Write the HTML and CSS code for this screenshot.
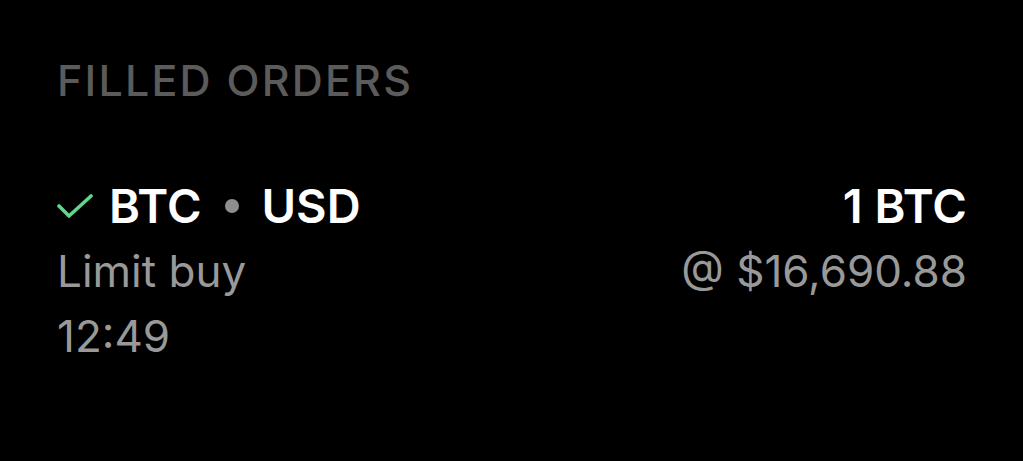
FILE: index.html
```html
<!DOCTYPE html>
<html lang="en">
<head>
    <meta charset="UTF-8">
    <title>Filled Orders</title>
    <link rel="stylesheet" href="styles.css">
</head>
<body>
    <section class="orders">
        <h2 class="orders-title">FILLED ORDERS</h2>
        <div class="order">
            <div class="order-left">
                <div class="pair">
                    <svg class="check" width="36" height="26" viewBox="0 0 36 26">
                        <path d="M2 13 L12 23 L34 3" fill="none" stroke="#5fd68c" stroke-width="3.6" stroke-linecap="round" stroke-linejoin="round"/>
                    </svg>
                    <span>BTC</span><span class="dot"></span><span>USD</span>
                </div>
                <div class="sub">Limit buy</div>
                <div class="sub">12:49</div>
            </div>
            <div class="order-right">
                <div class="amount">1 BTC</div>
                <div class="sub">@ $16,690.88</div>
            </div>
        </div>
    </section>
</body>
</html>
```

FILE: styles.css
```css
body {
    margin: 0;
    background: #000;
    color: #fff;
    font-family: Inter, 'Noto Sans', sans-serif;
}
.orders {
    padding: 54px 56px 0 57px;
}
.orders-title {
    margin: 0;
    font-size: 43px;
    font-weight: 500;
    letter-spacing: 2.2px;
    color: #5b5b5b;
    line-height: 52px;
}
.order {
    display: flex;
    justify-content: space-between;
    margin-top: 67px;
}
.pair {
    display: flex;
    align-items: center;
    font-size: 47px;
    font-weight: 600;
    line-height: 66px;
}
.check {
    margin-right: 16px;
}
.dot {
    width: 14px;
    height: 14px;
    border-radius: 50%;
    background: #8e8e8e;
    margin: 0 23px;
}
.sub {
    font-size: 44px;
    color: #999;
    line-height: 65px;
}
.order-right {
    text-align: right;
}
.amount {
    font-size: 47px;
    font-weight: 600;
    line-height: 66px;
}
```
